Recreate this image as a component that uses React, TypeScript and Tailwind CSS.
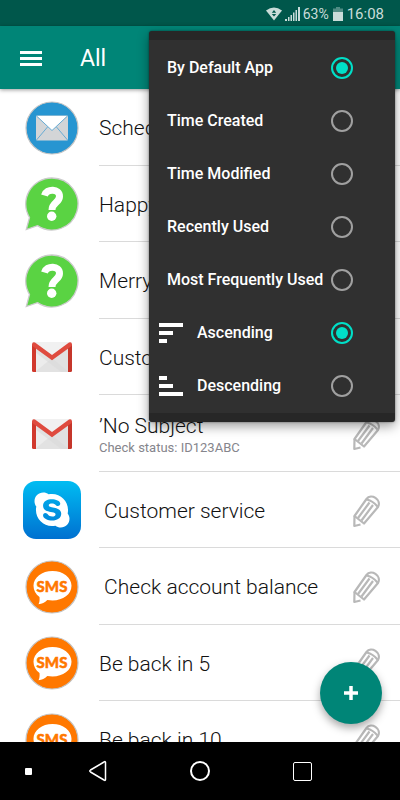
import { useState } from "react";
import type { ReactNode } from "react";
import { FaSkype } from "react-icons/fa";

type AppKind = "mail" | "whatsapp" | "gmail" | "skype" | "sms";

interface Task {
  app: AppKind;
  title: string;
  detail?: string;
}

const tasks: Task[] = [
  { app: "mail", title: "Scheduled" },
  { app: "whatsapp", title: "Happy" },
  { app: "whatsapp", title: "Merry" },
  { app: "gmail", title: "Customer" },
  { app: "gmail", title: "’No Subject", detail: "Check status: ID123ABC" },
  { app: "skype", title: " Customer service" },
  { app: "sms", title: " Check account balance" },
  { app: "sms", title: "Be back in 5" },
  { app: "sms", title: "Be back in 10" },
];

const sortKeys = [
  "By Default App",
  "Time Created",
  "Time Modified",
  "Recently Used",
  "Most Frequently Used",
];

function MailIcon() {
  return (
    <svg viewBox="0 0 54 54" className="size-[54px]" aria-hidden="true">
      <circle cx="27" cy="27" r="26" fill="#2795d1" stroke="#c4c4c4" strokeWidth="1.2" />
      <rect x="11" y="14.500" width="32" height="25" rx="1" fill="#d3d5d7" />
      <path d="M12 15 H42 L27 29.500 Z" fill="#fff" />
      <path d="M11.500 15 L27 29.500 L42.500 15 M11.500 39 L22.500 26 M42.500 39 L31.500 26" fill="none" stroke="#5aa6d2" strokeWidth="0.9" />
    </svg>
  );
}

function WhatsappIcon() {
  return (
    <svg viewBox="0 0 54 54" className="size-[54px]" aria-hidden="true">
      <path
        d="M27 1 A26 26 0 1 1 12.500 48.600 L1.300 52.500 L4.500 40.500 A26 26 0 0 1 27 1 Z"
        fill="#5ad343"
        stroke="#cbcbcb"
        strokeWidth="1.3"
      />
      <path d="M19.500 18.500 C21.500 11 34.800 11.500 34.500 19.500 C34.300 26 27 25.500 27 33" fill="none" stroke="#fff" strokeWidth="7" />
      <circle cx="26.700" cy="39.300" r="4.700" fill="#fff" />
    </svg>
  );
}

function GmailIcon() {
  return (
    <svg viewBox="0 0 42 32" className="h-8 w-[42px]" aria-hidden="true">
      <rect x="1" y="1" width="40" height="30" rx="2" fill="#ececec" />
      <path d="M4 31 L21 17 L38 31 Z" fill="#e2e2e2" />
      <path d="M4 5 L21 18 L38 5 V31 H30 L4 11 Z" fill="#dadada" opacity="0.6" />
      <path d="M3 1 H39 L21 14 Z" fill="#f1f1f1" />
      <path d="M1 3 L5 6 V31 H2.500 Q1 31 1 29.500 Z" fill="#d1392d" />
      <path d="M41 3 L37 6 V31 H39.500 Q41 31 41 29.500 Z" fill="#c5362b" />
      <path d="M1 3.500 Q1.200 0.500 4 1.500 L21 14 L38 1.500 Q40.800 0.500 41 3.500 Q41 4.800 40 5.600 L21 19.300 L2 5.600 Q1 4.800 1 3.500 Z" fill="#df4b3f" />
    </svg>
  );
}

function SkypeIcon() {
  return (
    <span className="flex size-[58px] items-center justify-center rounded-[13px] bg-gradient-to-b from-[#00bdf2] to-[#0070d0]">
      <FaSkype className="size-10 text-white" aria-hidden="true" />
    </span>
  );
}

function SmsIcon() {
  return (
    <svg viewBox="0 0 54 54" className="size-[54px]" aria-hidden="true">
      <circle cx="27" cy="27" r="26" fill="#ff7800" stroke="#c4c4c4" strokeWidth="1.2" />
      <path
        d="M27.500 11 C38 11 46.500 17.300 46.500 25.800 C46.500 34.300 38 40.500 27.500 40.500 C25.800 40.500 24 40.300 22.300 40 C19.800 42.500 17 44 13.500 44.200 C14.500 42.300 14.800 40 14.500 37 C10.700 34.200 8.500 30.300 8.500 25.800 C8.500 17.300 17 11 27.500 11 Z"
        fill="#fff"
      />
      <text x="27" y="32" textAnchor="middle" fontSize="15" fill="#ff7800" stroke="#ff7800" strokeWidth="0.5" className="font-[Lato] font-black">
        SMS
      </text>
    </svg>
  );
}

function AppIcon({ app }: { app: AppKind }) {
  switch (app) {
    case "mail":
      return <MailIcon />;
    case "whatsapp":
      return <WhatsappIcon />;
    case "gmail":
      return <GmailIcon />;
    case "skype":
      return <SkypeIcon />;
    case "sms":
      return <SmsIcon />;
  }
}

function PencilIcon() {
  return (
    <svg viewBox="0 0 28 34" className="h-[34px] w-7" fill="none" stroke="#b8b8b8" strokeWidth="2.200" strokeLinejoin="round" aria-hidden="true">
      <path d="M2.500 22 L14.500 5 C19 -1 30 5.500 26 13 L12 29.500 Z" />
      <path d="M2.500 22 L2.300 32 L8.500 30.500 M14.800 5.500 Q21 7 25.500 12.500 M6 24 L17.500 8.500 M9.500 26.500 L21 11" />
    </svg>
  );
}

function TaskRow({ task }: { task: Task }) {
  return (
    <li className="flex shrink-0 odd:h-[77px] even:h-[76px]">
      <div className="flex w-[104px] shrink-0 items-center justify-center">
        <AppIcon app={task.app} />
      </div>
      <div className="-ml-[5px] flex min-w-0 flex-1 items-center border-b border-[#dadada] pr-5">
        <div className="min-w-0 flex-1 pt-0.5">
          <p className="truncate text-[21px] leading-7 font-light whitespace-pre text-[#111]">{task.title}</p>
          {task.detail && <p className="truncate text-[13px] leading-4 text-[#85858c]">{task.detail}</p>}
        </div>
        <button type="button" aria-label="Edit" className="shrink-0 pt-0.5">
          <PencilIcon />
        </button>
      </div>
    </li>
  );
}

function OrderIcon({ descending }: { descending: boolean }) {
  return (
    <svg viewBox="0 0 24 20" className={descending ? "h-5 w-6 -scale-y-100" : "h-5 w-6"} fill="#fff" aria-hidden="true">
      <rect width="24" height="4" />
      <rect y="8" width="14" height="4" />
      <rect y="16" width="8" height="4" />
    </svg>
  );
}

interface OptionProps {
  group: string;
  label: string;
  checked: boolean;
  onSelect: () => void;
  icon?: ReactNode;
}

function Option({ group, label, checked, onSelect, icon }: OptionProps) {
  return (
    <label className={`flex h-[53px] items-center pr-[42px] ${icon ? "gap-[14px] pl-[10px]" : "pl-[18px]"}`}>
      {icon}
      <span className="flex-1 pt-px text-base font-medium whitespace-nowrap text-white">{label}</span>
      <input
        type="radio"
        name={group}
        checked={checked}
        onChange={onSelect}
        className="size-[22px] shrink-0 appearance-none rounded-full border-2 border-[#a0a0a0] bg-clip-content p-[3px] checked:border-[#00dfc8] checked:bg-[#00dfc8]"
      />
    </label>
  );
}

function SortMenu() {
  const [sortKey, setSortKey] = useState("By Default App");
  const [order, setOrder] = useState("Ascending");
  return (
    <form className="absolute top-[31px] right-[5px] z-20 w-[246px] overflow-hidden rounded-[3px] border-y-9 border-[#272727] bg-[#303030] py-px shadow-[0_4px_12px_rgba(0,0,0,0.4),0_0_2px_rgba(0,0,0,0.5)]">
      {sortKeys.map((key) => (
        <Option key={key} group="sort" label={key} checked={sortKey === key} onSelect={() => setSortKey(key)} />
      ))}
      {["Ascending", "Descending"].map((name) => (
        <Option
          key={name}
          group="order"
          label={name}
          checked={order === name}
          onSelect={() => setOrder(name)}
          icon={<OrderIcon descending={name === "Descending"} />}
        />
      ))}
    </form>
  );
}

function StatusBar() {
  return (
    <div className="flex h-[26px] shrink-0 items-center justify-end bg-[#00574b] pt-0.5 pr-4 text-[#c9dcd9]">
      <svg viewBox="0 0 16 14" className="mr-[3px] h-[14px] w-4" aria-hidden="true">
        <path d="M0 3.500 Q8 -2.500 16 3.500 L8 13.500 Z" fill="currentColor" />
        <path d="M5.800 5.700 L8 3 L10.200 5.700 Z M5.800 7 H10.200 L8 9.500 Z" fill="#00574b" />
      </svg>
      <svg viewBox="0 0 15 14" className="mr-[3px] h-[14px] w-[15px]" fill="currentColor" aria-hidden="true">
        <path d="M0 12 h2 v2 h-2z M3 10 h1.500 v4 h-1.500z M5.500 8 h1.500 v6 h-1.500z M8 5.500 h1.500 v8.500 h-1.500z M10.500 3 h1.500 v11 h-1.500z M13 0 h2 v14 h-2z" />
      </svg>
      <span className="mr-1 text-sm">63%</span>
      <svg viewBox="0 0 10 14" className="mr-1 h-[14px] w-[10px]" fill="currentColor" aria-hidden="true">
        <path d="M3 0 H7 V1.500 H10 V5 H0 V1.500 H3 Z" opacity="0.4" />
        <path d="M0 5 H10 V14 H0 Z" />
      </svg>
      <span className="text-[15px]">16:08</span>
    </div>
  );
}

function NavigationBar() {
  return (
    <nav className="grid h-[58px] shrink-0 grid-cols-[47px_1fr_1fr_1fr_47px] bg-black text-white">
      <button type="button" aria-label="Hide bar" className="flex items-center justify-center pl-[10px]">
        <span className="size-[7px] rounded-[1px] bg-white" />
      </button>
      <button type="button" aria-label="Back" className="flex items-center justify-center">
        <svg viewBox="0 0 20 22" className="h-[22px] w-5" fill="none" stroke="currentColor" strokeWidth="1.500" strokeLinejoin="round">
          <path d="M17.500 2.500 V19.500 Q17.500 21 16 20 L2.500 12 Q1 11 2.500 10 L16 2 Q17.500 1 17.500 2.500 Z" />
        </svg>
      </button>
      <button type="button" aria-label="Home" className="flex items-center justify-center">
        <span className="size-5 rounded-full border-2 border-white" />
      </button>
      <button type="button" aria-label="Recent apps" className="flex items-center justify-center">
        <span className="size-[19px] rounded-[2px] border border-white" />
      </button>
    </nav>
  );
}

export default function App() {
  return (
    <div className="relative flex h-screen flex-col overflow-hidden bg-white font-[Roboto,sans-serif]">
      <StatusBar />
      <header className="z-10 flex h-[63px] shrink-0 items-center gap-[38px] bg-[#008577] px-5 pt-0.5 shadow-[0_1px_4px_rgba(0,0,0,0.4)]">
        <button type="button" aria-label="Open menu" className="flex w-[22px] flex-col gap-[3px]">
          <span className="h-[3px] bg-white" />
          <span className="h-[3px] bg-white" />
          <span className="h-[3px] bg-white" />
        </button>
        <h1 className="pt-0.5 text-[23px] text-white">All</h1>
      </header>
      <main className="relative min-h-0 flex-1 overflow-hidden">
        <ul className="flex flex-col">
          {tasks.map((task) => (
            <TaskRow key={task.title} task={task} />
          ))}
        </ul>
        <button
          type="button"
          aria-label="Add"
          className="absolute right-[18px] bottom-[18px] flex size-[62px] items-center justify-center rounded-full bg-[#008577] shadow-[0_4px_8px_rgba(0,0,0,0.35)]"
        >
          <svg viewBox="0 0 16 16" className="size-4" stroke="#fff" strokeWidth="3.500" aria-hidden="true">
            <path d="M8 1 V15 M1 8 H15" />
          </svg>
        </button>
      </main>
      <NavigationBar />
      <SortMenu />
    </div>
  );
}
